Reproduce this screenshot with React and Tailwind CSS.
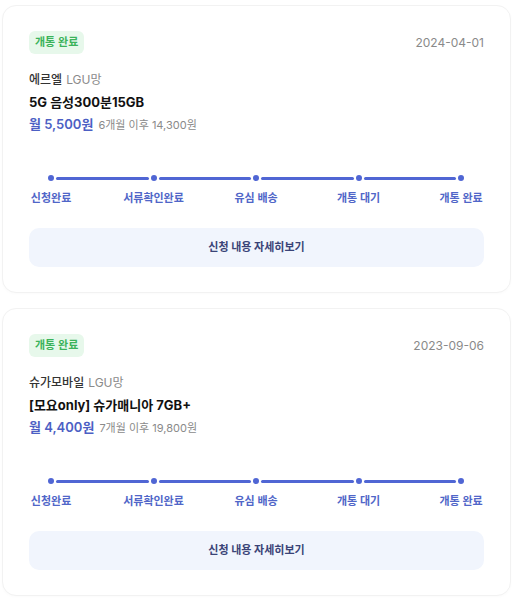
import React from "react";

const steps = ["신청완료", "서류확인완료", "유심 배송", "개통 대기", "개통 완료"];

const orders = [
  {
    date: "2024-04-01",
    carrier: "에르엘",
    network: "LGU망",
    plan: "5G 음성300분15GB",
    price: "월 5,500원",
    after: "6개월 이후 14,300원",
  },
  {
    date: "2023-09-06",
    carrier: "슈가모바일",
    network: "LGU망",
    plan: "[모요only] 슈가매니아 7GB+",
    price: "월 4,400원",
    after: "7개월 이후 19,800원",
  },
];

function Progress() {
  return (
    <div className="ml-[19px] mr-[20px]">
      <div className="flex items-center">
        {steps.map((s, i) => (
          <React.Fragment key={s}>
            {i > 0 && <div className="flex-1 h-[3px] mx-[2px] rounded-full bg-[#5066d4]" />}
            <div className="w-[6px] h-[6px] rounded-full bg-[#5066d4] shrink-0" />
          </React.Fragment>
        ))}
      </div>
      <div className="flex mt-[9px]">
        {steps.map((s, i) => (
          <React.Fragment key={s}>
            {i > 0 && <div className="flex-1" />}
            <div className="w-[6px] flex justify-center shrink-0">
              <span className="whitespace-nowrap text-[11px] leading-[16px] font-semibold text-[#5066c8]">{s}</span>
            </div>
          </React.Fragment>
        ))}
      </div>
    </div>
  );
}

function OrderCard({ o }) {
  return (
    <div className="rounded-[14px] border border-[#f2f2f2] bg-white shadow-[0_1px_3px_rgba(0,0,0,0.02)] px-[26px] pt-[25px] pb-[25px]">
      <div className="flex items-center justify-between">
        <span className="h-[23px] px-[6px] flex items-center rounded-[6px] bg-[#e7f8eb] text-[11px] font-semibold text-[#3bb35a]">
          개통 완료
        </span>
        <span className="text-[12px] text-[#8a8a8a]">{o.date}</span>
      </div>
      <div className="mt-[18px] text-[12px] leading-[16px]">
        <span className="font-medium text-[#333]">{o.carrier}</span>
        <span className="ml-[4px] text-[#8a8a8a]">{o.network}</span>
      </div>
      <div className="mt-[5px] text-[13px] leading-[18px] font-bold text-[#111]">{o.plan}</div>
      <div className="mt-[3px] flex items-baseline leading-[20px]">
        <span className="text-[13px] font-semibold text-[#4c5fc4]">{o.price}</span>
        <span className="ml-[5px] text-[11px] text-[#8a8a8a]">{o.after}</span>
      </div>
      <div className="mt-[40px]">
        <Progress />
      </div>
      <button className="mt-[22px] w-full h-[39px] rounded-[10px] bg-[#f1f5fd] text-[11px] font-bold text-[#3a4377]">
        신청 내용 자세히보기
      </button>
    </div>
  );
}

export default function App() {
  return (
    <div
      className="bg-white min-h-[600px] pl-[2px] pr-[3px] pt-[5px] flex flex-col gap-[15px]"
      style={{ fontFamily: 'Inter, "Noto Sans CJK KR", sans-serif' }}
    >
      {orders.map((o) => (
        <OrderCard key={o.date} o={o} />
      ))}
    </div>
  );
}
